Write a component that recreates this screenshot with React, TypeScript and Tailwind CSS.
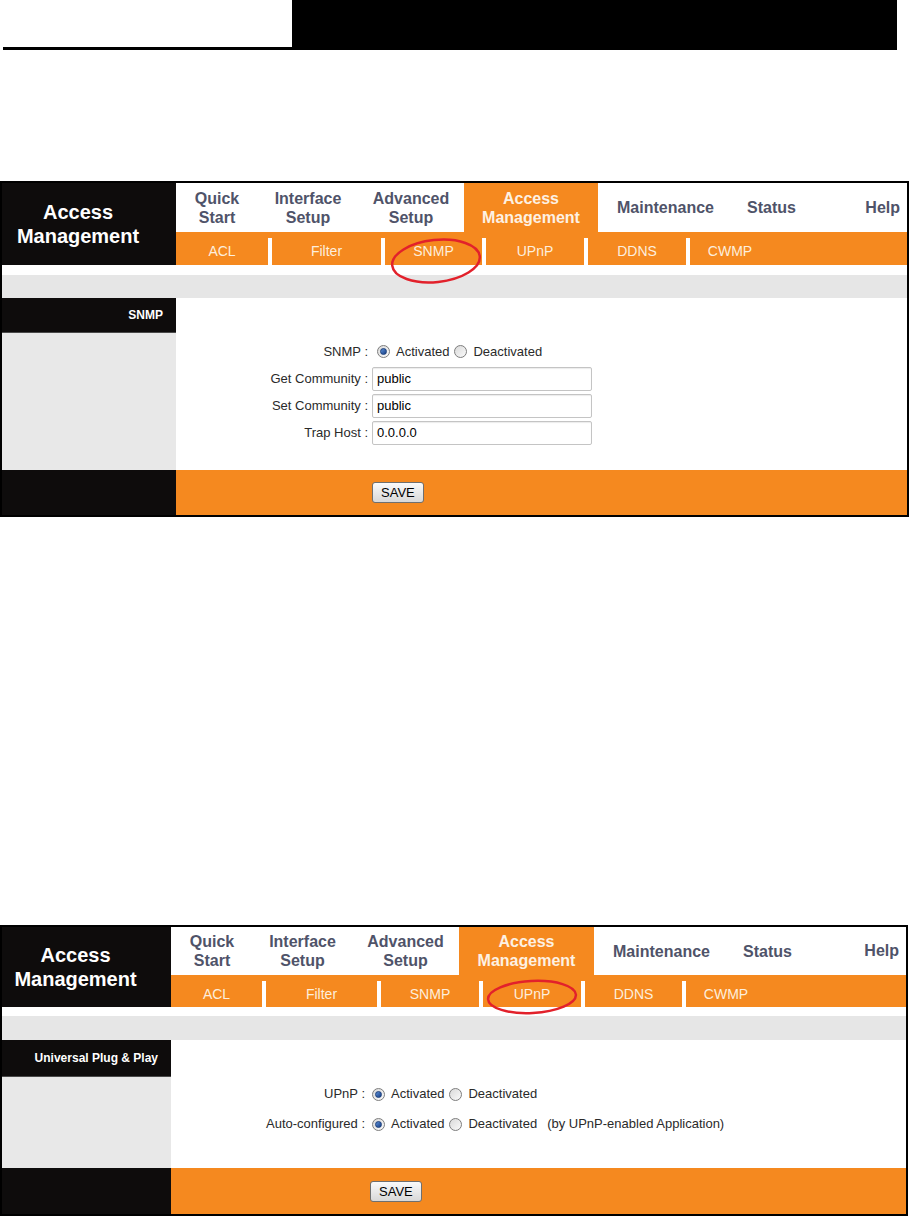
import React from "react";

type NavItem = { label: React.ReactNode; w: string; active?: boolean };
type SubItem = { label: string; w: string };

const navOne: NavItem[] = [
  { label: <>Quick<br />Start</>, w: "w-[82px]" },
  { label: <>Interface<br />Setup</>, w: "w-[100px]" },
  { label: <>Advanced<br />Setup</>, w: "w-[106px]" },
  { label: <>Access<br />Management</>, w: "w-[134px]", active: true },
  { label: "Maintenance", w: "w-[135px]" },
  { label: "Status", w: "w-[77px]" },
];

const navTwo: NavItem[] = [
  { label: <>Quick<br />Start</>, w: "w-[82px]" },
  { label: <>Interface<br />Setup</>, w: "w-[99px]" },
  { label: <>Advanced<br />Setup</>, w: "w-[107px]" },
  { label: <>Access<br />Management</>, w: "w-[135px]", active: true },
  { label: "Maintenance", w: "w-[135px]" },
  { label: "Status", w: "w-[77px]" },
];

const subOne: SubItem[] = [
  { label: "ACL", w: "w-[92px]" },
  { label: "Filter", w: "w-[109px]" },
  { label: "SNMP", w: "w-[97px]" },
  { label: "UPnP", w: "w-[98px]" },
  { label: "DDNS", w: "w-[98px]" },
  { label: "CWMP", w: "w-[80px]" },
];

const subTwo: SubItem[] = [
  { label: "ACL", w: "w-[91px]" },
  { label: "Filter", w: "w-[111px]" },
  { label: "SNMP", w: "w-[98px]" },
  { label: "UPnP", w: "w-[98px]" },
  { label: "DDNS", w: "w-[97px]" },
  { label: "CWMP", w: "w-[80px]" },
];

const Radio = ({ checked }: { checked?: boolean }) => (
  <span className="w-[13px] h-[13px] rounded-full border border-[#7d7d7d] bg-gradient-to-br from-[#d9d9d9] to-[#fbfbfb] flex items-center justify-center shrink-0">
    {checked && <span className="w-[7px] h-[7px] rounded-full bg-gradient-to-br from-[#5d8fd6] to-[#173f86] border border-[#1a3d7a]" />}
  </span>
);

const RadioPair = ({ extra }: { extra?: string }) => (
  <div className="flex items-center">
    <Radio checked />
    <span className="ml-[6px]">Activated</span>
    <div className="ml-[5px]"><Radio /></div>
    <span className="ml-[6px]">Deactivated</span>
    {extra && <span className="ml-[10px]">{extra}</span>}
  </div>
);

const TextBox = ({ value }: { value: string }) => (
  <div className="w-[220px] h-[24px] border border-[#c4c4c4] rounded-[2px] bg-white shadow-[inset_0_1px_1px_rgba(0,0,0,0.08)] flex items-center pl-[4px] text-black">
    {value}
  </div>
);

const SaveButton = () => (
  <button className="h-[21px] px-[8px] border border-[#6f6f6f] rounded-[3px] bg-gradient-to-b from-[#fafafa] to-[#d8d8d8] text-[13px] leading-none text-black">
    SAVE
  </button>
);

interface FrameProps {
  titleW: string;
  frameW: string;
  nav: NavItem[];
  sub: SubItem[];
  navH: string;
  subH: string;
  gapH: string;
  grayH: string;
  bodyH: string;
  footH: string;
  label: string;
  labelH: string;
  savePad: string;
  ellipse: React.ReactNode;
  children: React.ReactNode;
}

const Frame = ({
  titleW, frameW, nav, sub, navH, subH, gapH, grayH, bodyH, footH, label, labelH, savePad, ellipse, children,
}: FrameProps) => (
  <div className={`relative border-2 border-black ${frameW}`}>
    <div className="flex">
      <div className={`${titleW} shrink-0 bg-[#0e0c0c] flex items-center justify-center pr-[22px] text-center text-white font-bold text-[20px] leading-[24px]`}>
        Access<br />Management
      </div>
      <div className="flex-1 flex flex-col">
        <div className={`flex ${navH}`}>
          {nav.map((n, i) => (
            <div
              key={i}
              className={`${n.w} shrink-0 flex items-center justify-center text-center font-bold text-[16px] leading-[19px] ${n.active ? "bg-[#f5891f] text-[#fdf1e3]" : "bg-white text-[#4f5369]"}`}
            >
              {n.label}
            </div>
          ))}
          <div className="flex-1 flex items-center justify-end pr-[7px] bg-white font-bold text-[16px] text-[#4f5369]">Help</div>
        </div>
        <div className={`flex ${subH} bg-[#f5891f]`}>
          {sub.map((s, i) => (
            <React.Fragment key={s.label}>
              {i > 0 && <div className="w-[4px] mt-[6px] bg-white shrink-0" />}
              <div className={`${s.w} shrink-0 mt-[6px] flex items-center justify-center text-[14px] text-[#fdeedd]`}>{s.label}</div>
            </React.Fragment>
          ))}
        </div>
      </div>
    </div>
    <div className={`${gapH} bg-white`} />
    <div className={`${grayH} bg-[#e6e6e6]`} />
    <div className={`flex ${bodyH}`}>
      <div className={`${titleW} shrink-0 bg-[#e8e8e8]`}>
        <div className={`${labelH} bg-[#0e0c0c] border-b border-[#4a4a4a] flex items-center justify-end pr-[13px] text-white font-bold text-[12px]`}>
          {label}
        </div>
      </div>
      <div className="flex-1 bg-white text-[13px] text-[#2a2a2a]">{children}</div>
    </div>
    <div className={`flex ${footH}`}>
      <div className={`${titleW} shrink-0 bg-[#0e0c0c]`} />
      <div className={`flex-1 bg-[#f5891f] flex items-center ${savePad}`}>
        <SaveButton />
      </div>
    </div>
    {ellipse}
  </div>
);

export default function App() {
  return (
    <div className="w-[910px] min-h-[1217px] bg-white font-['Liberation_Sans',Arial,sans-serif]">
      <div className="flex h-[50px]">
        <div className="ml-[3px] w-[289px] border-b-[3px] border-black" />
        <div className="w-[605px] bg-black" />
      </div>

      <div className="mt-[131px]">
        <Frame
          titleW="w-[174px]"
          frameW="w-[909px]"
          nav={navOne}
          sub={subOne}
          navH="h-[49px]"
          subH="h-[33px]"
          gapH="h-[10px]"
          grayH="h-[23px]"
          bodyH="h-[172px]"
          footH="h-[45px]"
          label="SNMP"
          labelH="h-[35px]"
          savePad="pl-[196px]"
          ellipse={
            <svg className="absolute left-[386px] top-[50px] w-[96px] h-[56px]" viewBox="0 0 96 56" fill="none">
              <ellipse cx="48" cy="28" rx="44" ry="21" transform="rotate(-6 48 28)" stroke="#e2212b" strokeWidth="2.5" />
            </svg>
          }
        >
          <div className="pt-[40px] flex flex-col">
            {[
              { l: "SNMP", c: <div className="ml-[5px]"><RadioPair /></div> },
              { l: "Get Community", c: <TextBox value="public" /> },
              { l: "Set Community", c: <TextBox value="public" /> },
              { l: "Trap Host", c: <TextBox value="0.0.0.0" /> },
            ].map((r) => (
              <div key={r.l} className="flex items-center h-[27px]">
                <div className="w-[192px] text-right">{r.l} :</div>
                <div className="ml-[4px] flex items-center">{r.c}</div>
              </div>
            ))}
          </div>
        </Frame>
      </div>

      <div className="mt-[408px]">
        <Frame
          titleW="w-[169px]"
          frameW="w-[908px]"
          nav={navTwo}
          sub={subTwo}
          navH="h-[48px]"
          subH="h-[32px]"
          gapH="h-[9px]"
          grayH="h-[24px]"
          bodyH="h-[128px]"
          footH="h-[46px]"
          label="Universal Plug & Play"
          labelH="h-[37px]"
          savePad="pl-[199px]"
          ellipse={
            <svg className="absolute left-[482px] top-[50px] w-[96px] h-[40px]" viewBox="0 0 96 40" fill="none">
              <ellipse cx="48" cy="20" rx="44" ry="16" transform="rotate(-3 48 20)" stroke="#e2212b" strokeWidth="2.5" />
            </svg>
          }
        >
          <div className="pt-[39px] flex flex-col">
            <div className="flex items-center h-[30px]">
              <div className="w-[194px] text-right">UPnP :</div>
              <div className="ml-[7px]"><RadioPair /></div>
            </div>
            <div className="flex items-center h-[30px]">
              <div className="w-[194px] text-right">Auto-configured :</div>
              <div className="ml-[7px]"><RadioPair extra="(by UPnP-enabled Application)" /></div>
            </div>
          </div>
        </Frame>
      </div>
    </div>
  );
}
